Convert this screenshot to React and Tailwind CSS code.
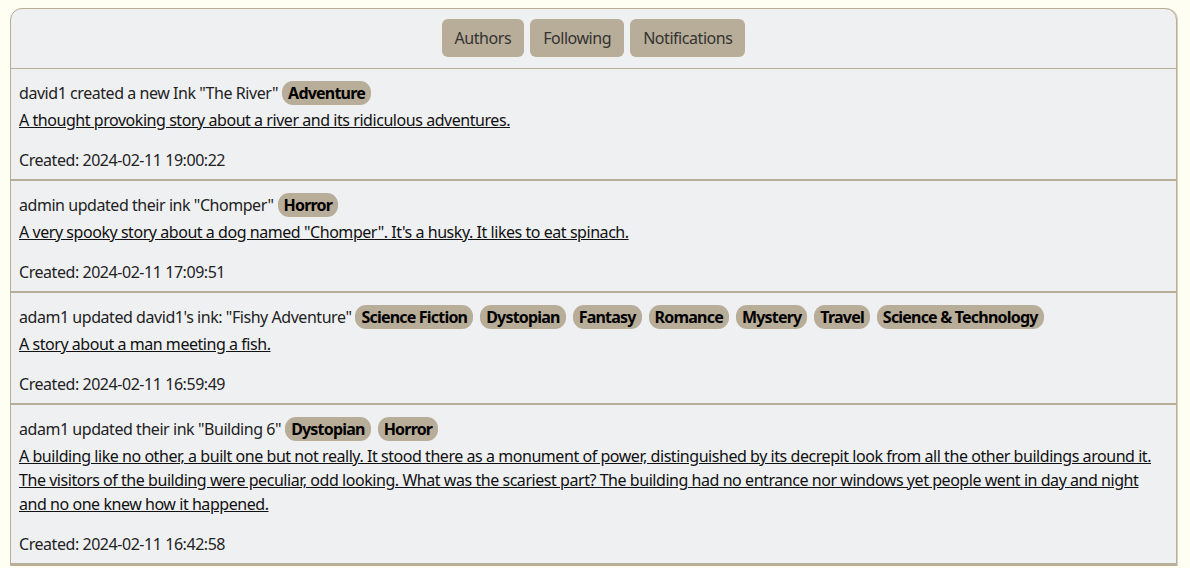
import React from "react";

const font = { fontFamily: "'Noto Sans', 'Open Sans', Arial, sans-serif" };

const items = [
  {
    title: 'david1 created a new Ink "The River"',
    tags: ["Adventure"],
    desc: "A thought provoking story about a river and its ridiculous adventures.",
    created: "2024-02-11 19:00:22",
  },
  {
    title: 'admin updated their ink "Chomper"',
    tags: ["Horror"],
    desc: 'A very spooky story about a dog named "Chomper". It\'s a husky. It likes to eat spinach.',
    created: "2024-02-11 17:09:51",
  },
  {
    title: 'adam1 updated david1\'s ink: "Fishy Adventure"',
    tags: ["Science Fiction", "Dystopian", "Fantasy", "Romance", "Mystery", "Travel", "Science & Technology"],
    desc: "A story about a man meeting a fish.",
    created: "2024-02-11 16:59:49",
  },
  {
    title: 'adam1 updated their ink "Building 6"',
    tags: ["Dystopian", "Horror"],
    desc: "A building like no other, a built one but not really. It stood there as a monument of power, distinguished by its decrepit look from all the other buildings around it. The visitors of the building were peculiar, odd looking. What was the scariest part? The building had no entrance nor windows yet people went in day and night and no one knew how it happened.",
    created: "2024-02-11 16:42:58",
  },
];

function Tag({ label }) {
  return (
    <span className="mx-[3.5px] inline-flex items-center h-6 px-[6px] rounded-[11px] bg-[#b8ad98] font-bold text-black tracking-[-0.8px]">
      {label}
    </span>
  );
}

function FeedItem({ item }) {
  return (
    <div className="px-2 pt-3 pb-[7px] border-b-2 border-[#b8ad98]">
      <div className="flex items-center h-6 text-[#222]">
        <span className="mr-[0.5px]">{item.title}</span>
        {item.tags.map((t) => (
          <Tag key={t} label={t} />
        ))}
      </div>
      <a href="#" className="block mt-[3px] underline text-[#111] leading-6">
        {item.desc}
      </a>
      <div className="mt-4 leading-6 text-[#222]">Created: {item.created}</div>
    </div>
  );
}

export default function App() {
  const tabs = ["Authors", "Following", "Notifications"];
  return (
    <div className="min-h-screen bg-[#fefef2] pt-2 text-[16px] leading-6 tracking-[-0.45px]" style={font}>
      <div className="ml-[10px] w-[1167px] bg-[#eff0f2] border border-[#b8ad98] rounded-t-[12px] shadow-[1px_0_0_#d8d0c0]">
        <div className="flex justify-center gap-[6px] pt-[10px] pb-[11px] border-b border-[#b8ad98]">
          {tabs.map((t) => (
            <button key={t} className="h-[38px] px-[13px] rounded-md bg-[#b8ad98] text-[#333] tracking-[-0.45px]">
              {t}
            </button>
          ))}
        </div>
        {items.map((item, i) => (
          <FeedItem key={i} item={item} />
        ))}
      </div>
    </div>
  );
}
